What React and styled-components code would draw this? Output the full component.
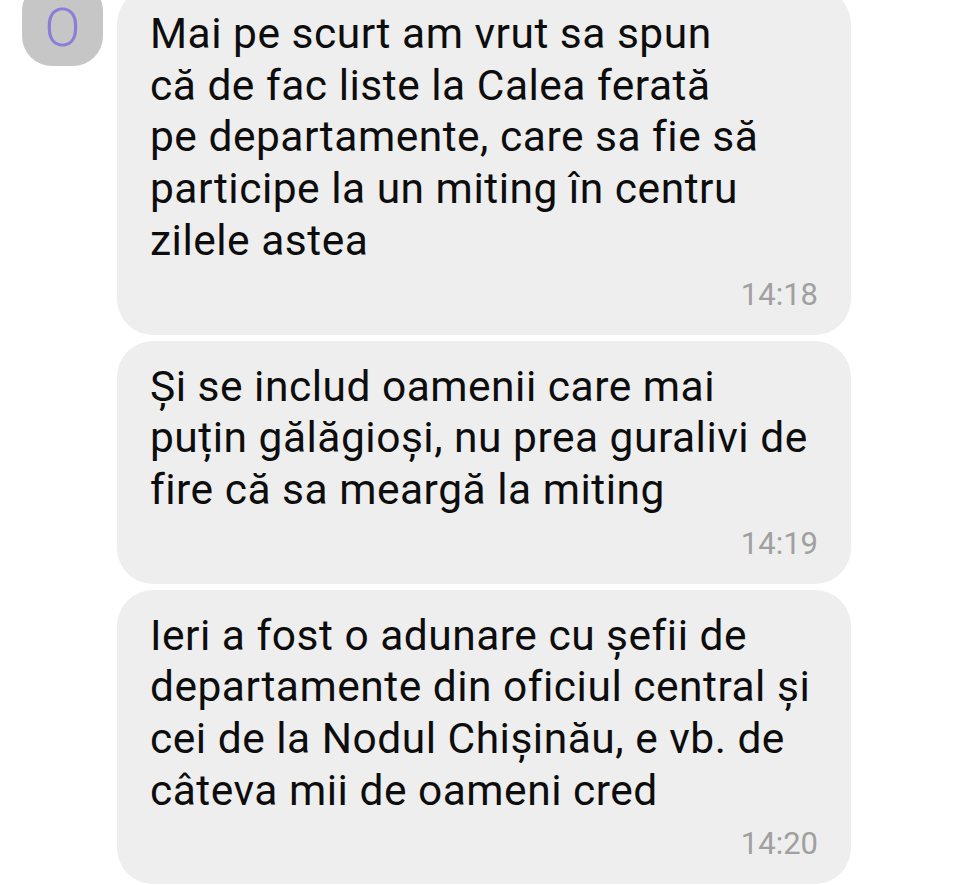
import React from 'react'
import styled, { createGlobalStyle } from 'styled-components'

const GlobalStyle = createGlobalStyle`
  html, body {
    margin: 0;
    padding: 0;
    background: #ffffff;
    overflow: hidden;
  }
  body {
    font-family: Roboto, "Noto Sans", "Liberation Sans", sans-serif;
  }
`

const ChatFrame = styled.div`
  display: flex;
  align-items: flex-start;
  gap: 14px;
  padding-left: 22px;
  margin-top: -12px;
`

const Avatar = styled.div`
  flex: none;
  width: 81px;
  height: 80px;
  margin-top: -2px;
  background: #c6c6c6;
  border-radius: 24px 24px 30px 30px;
  display: flex;
  align-items: center;
  justify-content: center;
  padding-top: 4px;
  box-sizing: border-box;

  span {
    display: block;
    font-size: 53px;
    font-weight: 300;
    color: #8a7ed8;
    line-height: 42px;
  }
`

const MessageList = styled.div`
  display: flex;
  flex-direction: column;
  gap: 6px;
`

const Bubble = styled.div`
  width: 734px;
  box-sizing: border-box;
  background: #eeeeee;
  border-radius: 36px;
  padding: 20px 33px 22px 33px;
  display: flex;
  flex-direction: column;
`

const Text = styled.div`
  font-size: 42.5px;
  line-height: 51.7px;
  color: #0d0d0d;
  white-space: pre-line;
  letter-spacing: 0.5px;
`

const Time = styled.div`
  align-self: flex-end;
  margin-top: 10px;
  font-size: 31px;
  line-height: 36px;
  color: #a0a0a0;
`

const messages = [
  {
    text: 'Mai pe scurt am vrut sa spun\ncă de fac liste la Calea ferată\npe departamente, care sa fie să\nparticipe la un miting în centru\nzilele astea',
    time: '14:18',
  },
  {
    text: 'Și se includ oamenii care mai\npuțin gălăgioși, nu prea guralivi de\nfire că sa meargă la miting',
    time: '14:19',
  },
  {
    text: 'Ieri a fost o adunare cu șefii de\ndepartamente din oficiul central și\ncei de la Nodul Chișinău, e vb. de\ncâteva mii de oameni cred',
    time: '14:20',
  },
]

export default function App() {
  return (
    <>
      <GlobalStyle />
      <ChatFrame>
        <Avatar>
          <span>O</span>
        </Avatar>
        <MessageList>
          {messages.map((m) => (
            <Bubble key={m.time}>
              <Text>{m.text}</Text>
              <Time>{m.time}</Time>
            </Bubble>
          ))}
        </MessageList>
      </ChatFrame>
    </>
  )
}
